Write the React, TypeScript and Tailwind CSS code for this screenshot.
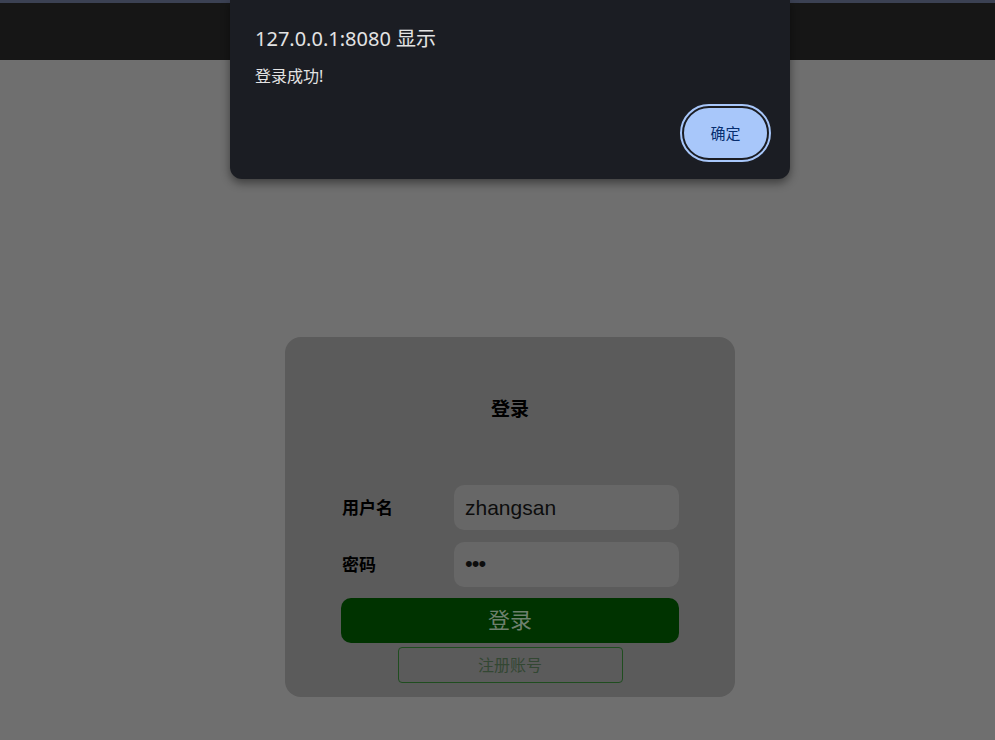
import React from 'react';

const cjk = { fontFamily: '"Liberation Sans", "Noto Sans CJK SC", sans-serif' };

const AlertDialog: React.FC = () => (
  <div
    className="absolute left-[230px] top-0 w-[560px] h-[179px] rounded-b-[12px] bg-[#1b1d23] shadow-[0_4px_10px_rgba(0,0,0,0.45)] px-[25px] pt-[25px]"
    style={{ fontFamily: '"Noto Sans", "Noto Sans CJK SC", sans-serif' }}
  >
    <div className="text-[20px] leading-[28px] text-[#e3e3e3]">127.0.0.1:8080 显示</div>
    <div className="mt-[12px] text-[16px] leading-[22px] text-[#e3e3e3]">登录成功!</div>
    <div className="flex justify-end mt-[19px]">
      <button className="w-[87px] h-[54px] rounded-full bg-[#a8c7fa] text-[#062e6f] text-[15px] border-2 border-[#1b1d23] outline-2 outline-[#a8c7fa] mr-[-4px]">
        确定
      </button>
    </div>
  </div>
);

const LoginCard: React.FC = () => (
  <div className="w-[450px] h-[360px] ml-[285px] mt-[277px] rounded-[16px] bg-[#5b5b5b] pt-[61px] px-[56px]" style={cjk}>
    <h1 className="text-center text-[19px] leading-[24px] font-bold text-black">登录</h1>
    <div className="mt-[63px] flex flex-col gap-[12px]">
      <div className="flex items-center">
        <label className="w-[113px] pl-[1px] pt-[3px] text-[17px] font-bold text-black">用户名</label>
        <div className="w-[225px] h-[45px] rounded-[10px] bg-[#676767] flex items-center px-[11px] text-[21px] text-[#0d0d0d]" style={{ fontFamily: '"Liberation Sans", sans-serif' }}>
          zhangsan
        </div>
      </div>
      <div className="flex items-center">
        <label className="w-[113px] pl-[1px] pt-[2px] text-[17px] font-bold text-black">密码</label>
        <div className="w-[225px] h-[45px] rounded-[10px] bg-[#676767] flex items-center px-[11px] pb-[2px] text-[22px] text-[#0d0d0d] tracking-[-1px]" style={{ fontFamily: '"Liberation Sans", sans-serif' }}>
          •••
        </div>
      </div>
    </div>
    <button className="mt-[11px] w-[338px] h-[45px] rounded-[10px] bg-[#003300] text-[22px] text-[#6e806e]">登录</button>
    <div className="flex justify-center mt-[4px]">
      <button className="w-[225px] h-[36px] rounded-[4px] border border-[#1f4d1f] pt-[1px] text-[16px] text-[#334733]">注册账号</button>
    </div>
  </div>
);

const App: React.FC = () => (
  <div className="relative w-[995px] h-[740px] bg-[#6f6f6f] overflow-hidden">
    <div className="h-[60px] bg-[#161616] border-t-[3px] border-[#3b4153]" />
    <LoginCard />
    <AlertDialog />
  </div>
);

export default App;
